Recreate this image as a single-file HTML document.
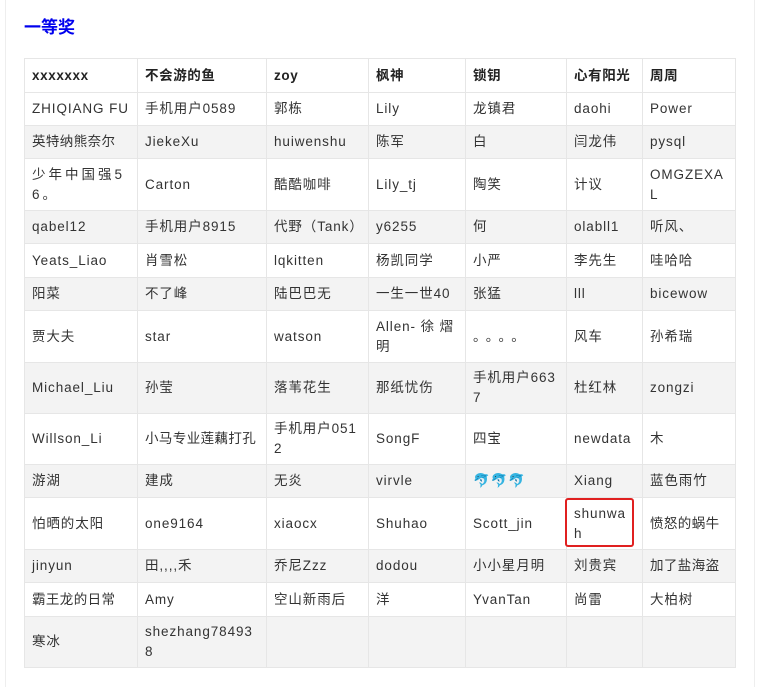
<!DOCTYPE html>
<html><head><meta charset="utf-8"><style>
html,body{margin:0;padding:0;background:#fff;width:759px;height:687px;overflow:hidden}
body{font-family:"Liberation Sans","Noto Sans CJK SC",sans-serif;color:#333;position:relative}
.frame{position:absolute;left:5px;top:-1px;width:748px;height:700px;border-left:1px solid #eee;border-right:1px solid #eee}
h3{position:absolute;left:24px;top:13px;margin:0;font-size:17px;color:#0000ee;font-weight:bold;font-family:"Noto Sans CJK SC",sans-serif}
table{position:absolute;left:24px;top:58px;border-collapse:collapse;table-layout:fixed;width:711px;font-size:13.5px;letter-spacing:0.9px}
td,th{border:1px solid #e6e6e6;padding:0 7px;vertical-align:middle;text-align:left;line-height:20px;word-break:break-all}
th{font-weight:bold;color:#222;letter-spacing:0.6px}
tr:nth-child(odd) td{background:#f3f3f3}
.c{letter-spacing:0.4px}
.box{position:absolute;left:565px;top:498px;width:65px;height:45px;border:2px solid #e02020;border-radius:3px}
</style></head><body>
<div class="frame"></div>
<h3>一等奖</h3>
<table>
<colgroup><col style="width:113px"><col style="width:129px"><col style="width:102px"><col style="width:97px"><col style="width:101px"><col style="width:76px"><col style="width:93px"></colgroup>
<tr style="height:34px"><th>xxxxxxx</th><th>不会游的鱼</th><th>zoy</th><th>枫神</th><th>锁钥</th><th>心有阳光</th><th>周周</th></tr>
<tr style="height:33px"><td>ZHIQIANG FU</td><td>手机用户0589</td><td>郭栋</td><td>Lily</td><td>龙镇君</td><td>daohi</td><td>Power</td></tr>
<tr style="height:33px"><td class="c">英特纳熊奈尔</td><td>JiekeXu</td><td>huiwenshu</td><td>陈军</td><td>白</td><td>闫龙伟</td><td>pysql</td></tr>
<tr style="height:52px"><td style="letter-spacing:3px">少年中国强5<br>6。</td><td>Carton</td><td>酷酷咖啡</td><td>Lily_tj</td><td>陶笑</td><td>计议</td><td>OMGZEXA<br>L</td></tr>
<tr style="height:33px"><td>qabel12</td><td>手机用户8915</td><td>代野（Tank）</td><td>y6255</td><td>何</td><td>olabll1</td><td>听风、</td></tr>
<tr style="height:34px"><td>Yeats_Liao</td><td>肖雪松</td><td>lqkitten</td><td>杨凯同学</td><td>小严</td><td>李先生</td><td>哇哈哈</td></tr>
<tr style="height:33px"><td>阳菜</td><td>不了峰</td><td>陆巴巴无</td><td>一生一世40</td><td>张猛</td><td>lll</td><td>bicewow</td></tr>
<tr style="height:52px"><td>贾大夫</td><td>star</td><td>watson</td><td>Allen- 徐 熠<br>明</td><td style="letter-spacing:6px">。。。。</td><td>风车</td><td>孙希瑞</td></tr>
<tr style="height:51px"><td>Michael_Liu</td><td>孙莹</td><td>落苇花生</td><td>那纸忧伤</td><td>手机用户663<br>7</td><td>杜红林</td><td>zongzi</td></tr>
<tr style="height:51px"><td>Willson_Li</td><td class="c" style="white-space:nowrap">小马专业莲藕打孔</td><td>手机用户051<br>2</td><td>SongF</td><td>四宝</td><td>newdata</td><td>木</td></tr>
<tr style="height:33px"><td>游湖</td><td>建成</td><td>无炎</td><td>virvle</td><td style="color:#1a7fa8">🐬🐬🐬</td><td>Xiang</td><td>蓝色雨竹</td></tr>
<tr style="height:52px"><td>怕晒的太阳</td><td>one9164</td><td>xiaocx</td><td>Shuhao</td><td>Scott_jin</td><td>shunwa<br>h</td><td class="c">愤怒的蜗牛</td></tr>
<tr style="height:33px"><td>jinyun</td><td>田,,,,禾</td><td>乔尼Zzz</td><td>dodou</td><td>小小星月明</td><td>刘贵宾</td><td class="c">加了盐海盗</td></tr>
<tr style="height:34px"><td class="c">霸王龙的日常</td><td>Amy</td><td>空山新雨后</td><td>洋</td><td>YvanTan</td><td>尚雷</td><td>大柏树</td></tr>
<tr style="height:51px"><td>寒冰</td><td>shezhang78493<br>8</td><td></td><td></td><td></td><td></td><td></td></tr>
</table>
<div class="box"></div>
</body></html>
